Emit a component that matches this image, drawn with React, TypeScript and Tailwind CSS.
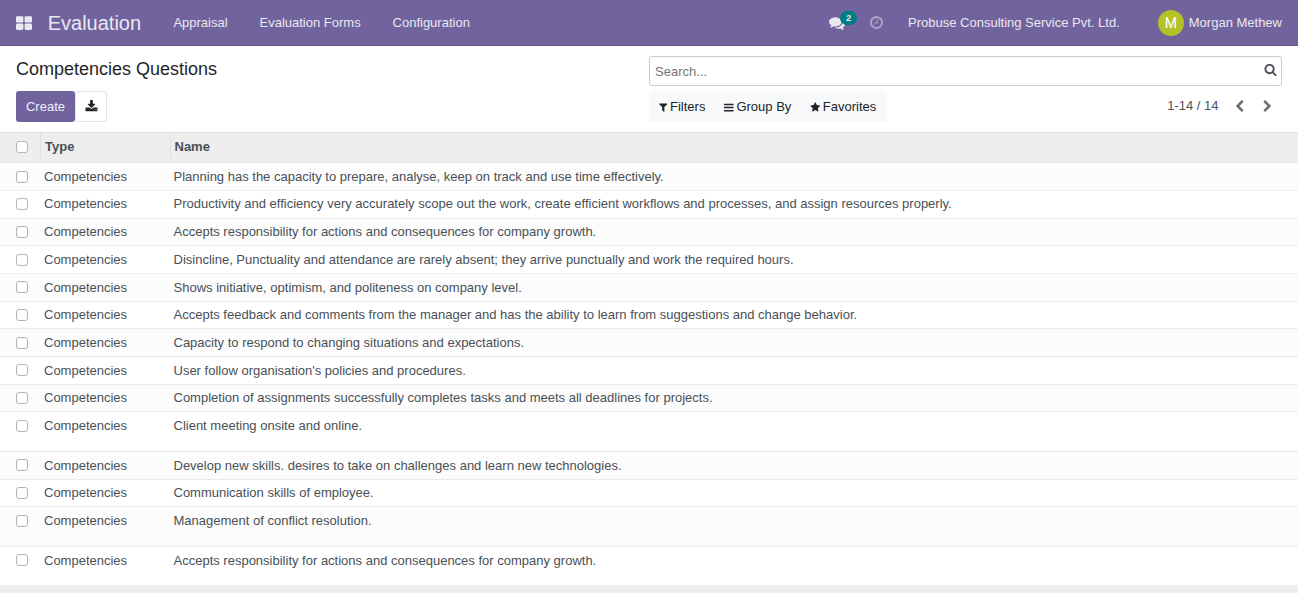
import React from "react";

const ICONS = {
  search: "M1216 832q0-185-131.5-316.5t-316.5-131.5-316.5 131.5-131.5 316.5 131.5 316.5 316.5 131.5 316.5-131.5 131.5-316.5zm512 832q0 52-38 90t-90 38q-54 0-90-38l-343-342q-179 124-399 124-143 0-273.5-55.5t-225-150-150-225-55.5-273.5 55.5-273.5 150-225 225-150 273.5-55.5 273.5 55.5 225 150 150 225 55.5 273.5q0 220-124 399l343 343q37 37 37 90z",
  star: "M1728 647q0 22-26 48l-363 354 86 500q1 7 1 20 0 21-10.5 35.5t-30.5 14.5q-19 0-40-12l-449-236-449 236q-22 12-40 12-21 0-31.5-14.5t-10.5-35.5q0-6 2-20l86-500-364-354q-25-27-25-48 0-37 56-46l502-73 225-455q19-41 49-41t49 41l225 455 502 73q56 9 56 46z",
  filter: "M1595 295q17 41-14 70l-493 493v742q0 42-39 59-13 5-25 5-27 0-45-19l-256-256q-19-19-19-45v-486l-493-493q-31-29-14-70 17-39 59-39h1280q42 0 59 39z",
  download: "M1344 1344q0-26-19-45t-45-19-45 19-19 45 19 45 45 19 45-19 19-45zm256 0q0-26-19-45t-45-19-45 19-19 45 19 45 45 19 45-19 19-45zm128-224v320q0 40-28 68t-68 28h-1472q-40 0-68-28t-28-68v-320q0-40 28-68t68-28h465l135 136q58 56 136 56t136-56l136-136h464q40 0 68 28t28 68zm-325-569q17 41-14 70l-448 448q-18 19-45 19t-45-19l-448-448q-31-29-14-70 17-39 59-39h256v-448q0-26 19-45t45-19h256q26 0 45 19t19 45v448h256q42 0 59 39z",
  clock: "M1024 544v448q0 14-9 23t-23 9h-320q-14 0-23-9t-9-23v-64q0-14 9-23t23-9h224v-352q0-14 9-23t23-9h64q14 0 23 9t9 23zm416 352q0-148-73-273t-198-198-273-73-273 73-198 198-73 273 73 273 198 198 273 73 273-73 198-198 73-273zm224 0q0 209-103 385.5t-279.5 279.5-385.5 103-385.5-103-279.5-279.5-103-385.5 103-385.5 279.5-279.5 385.5-103 385.5 103 279.5 279.5 103 385.5z",
  comments: "M1408 768q0 139-94 257t-256.5 186.5-353.5 68.5q-86 0-176-16-124 88-278 128-36 9-86 16h-3q-11 0-20.5-8t-11.5-21q-1-3-1-6.5t.5-6.5 2-6l2.5-5 3.5-5.5 4-5 4.5-5 4-4.5q5-6 23-25t26-29.5 22.5-29 25-38.5 20.5-44q-124-72-195-177t-71-224q0-139 94-257t256.5-186.5 353.5-68.5 353.5 68.5 256.5 186.5 94 257zm384 256q0 120-71 224.5t-195 176.5q10 24 20.5 44t25 38.5 22.5 29 26 29.5 23 25q1 1 4 4.5t4.5 5 4 5 3.5 5.5l2.5 5 2 6 .5 6.5-1 6.5q-3 14-13 22t-22 7q-50-7-86-16-154-40-278-128-90 16-176 16-271 0-472-132 58 4 88 4 161 0 309-45t264-129q125-92 192-212t67-254q0-77-23-152 129 71 204 178t75 230z",
  left: "M1427 301l-531 531 531 531q19 19 19 45t-19 45l-166 166q-19 19-45 19t-45-19l-742-742q-19-19-19-45t19-45l742-742q19-19 45-19t45 19l166 166q19 19 19 45t-19 45z",
  right: "M365 301l531 531-531 531q-19 19-19 45t19 45l166 166q19 19 45 19t45-19l742-742q19-19 19-45t-19-45l-742-742q-19-19-45-19t-45 19l-166 166q-19 19-19 45t19 45z",
};

function Icon({ name, className }: { name: keyof typeof ICONS; className: string }) {
  return (
    <svg viewBox="0 0 1792 1792" fill="currentColor" className={`shrink-0 overflow-visible ${className}`} aria-hidden="true">
      <path d={ICONS[name]} />
    </svg>
  );
}

function AppsIcon() {
  return (
    <svg viewBox="0 0 16 14" fill="currentColor" className="mt-[1px] h-[14px] w-4 shrink-0" aria-hidden="true">
      <rect x="0" y="0.2" width="7.4" height="6.4" rx="1.3" />
      <rect x="8.6" y="0.2" width="7.4" height="6.4" rx="1.3" />
      <rect x="0" y="7.5" width="7.4" height="6.4" rx="1.3" />
      <rect x="8.6" y="7.5" width="7.4" height="6.4" rx="1.3" />
    </svg>
  );
}

function BarsIcon() {
  return (
    <svg viewBox="0 0 10 9" fill="currentColor" className="mt-[2px] ml-[19px] h-[9px] w-[10px] shrink-0" aria-hidden="true">
      <rect x="0" y="0.7" width="9.6" height="1.5" rx="0.3" />
      <rect x="0" y="3.8" width="9.6" height="1.5" rx="0.3" />
      <rect x="0" y="6.9" width="9.6" height="1.5" rx="0.3" />
    </svg>
  );
}

function Checkbox({ label }: { label: string }) {
  return (
    <input
      type="checkbox"
      aria-label={label}
      className="block size-3 shrink-0 appearance-none rounded-[3px] border border-[#adb5bd] bg-white"
    />
  );
}

const ROWS: { name: string; height: string; check: string }[] = [
  { name: "Planning has the capacity to prepare, analyse, keep on track and use time effectively.", height: "h-[28px] pt-[4px]", check: "h-[20px]" },
  { name: "Productivity and efficiency very accurately scope out the work, create efficient workflows and processes, and assign resources properly.", height: "h-[28px] pt-[3px]", check: "h-[20px]" },
  { name: "Accepts responsibility for actions and consequences for company growth.", height: "h-[27px] pt-[3px]", check: "h-[20px]" },
  { name: "Disincline, Punctuality and attendance are rarely absent; they arrive punctually and work the required hours.", height: "h-[28px] pt-[4px]", check: "h-[20px]" },
  { name: "Shows initiative, optimism, and politeness on company level.", height: "h-[28px] pt-[4px]", check: "h-[18px]" },
  { name: "Accepts feedback and comments from the manager and has the ability to learn from suggestions and change behavior.", height: "h-[27px] pt-[3px]", check: "h-[20px]" },
  { name: "Capacity to respond to changing situations and expectations.", height: "h-[28px] pt-[4px]", check: "h-[20px]" },
  { name: "User follow organisation's policies and procedures.", height: "h-[28px] pt-[4px]", check: "h-[18px]" },
  { name: "Completion of assignments successfully completes tasks and meets all deadlines for projects.", height: "h-[27px] pt-[3px]", check: "h-[20px]" },
  { name: "Client meeting onsite and online.", height: "h-[40px] pt-[4px]", check: "h-[20px]" },
  { name: "Develop new skills. desires to take on challenges and learn new technologies.", height: "h-[28px] pt-[4px]", check: "h-[18px]" },
  { name: "Communication skills of employee.", height: "h-[27px] pt-[3px]", check: "h-[20px]" },
  { name: "Management of conflict resolution.", height: "h-[40px] pt-[4px]", check: "h-[20px]" },
  { name: "Accepts responsibility for actions and consequences for company growth.", height: "h-[38px] pt-[4px]", check: "h-[18px]" },
];

function Navbar() {
  return (
    <header className="flex h-[46px] shrink-0 items-center border-b border-[#5a4f7f] bg-[#71639e] px-4 text-[#eae8f0]">
      <AppsIcon />
      <span className="ml-[15.7px] pt-[2px] text-[20px]">Evaluation</span>
      <nav className="ml-[32.3px] flex gap-[31.9px]">
        <a>Appraisal</a>
        <a>Evaluation Forms</a>
        <a>Configuration</a>
      </nav>
      <div className="relative ml-auto flex items-center">
        <Icon name="comments" className="size-4" />
        <span className="absolute -top-[4px] left-[11px] flex h-[14px] w-[17px] items-center justify-center rounded-full bg-[#017e84] text-[9.5px] font-bold">
          2
        </span>
      </div>
      <Icon name="clock" className="ml-6 size-[15px] opacity-50" />
      <span className="ml-6">Probuse Consulting Service Pvt. Ltd.</span>
      <span className="mt-px ml-[38px] flex size-[26px] items-center justify-center rounded-full bg-[#b4c127] pt-[2px] font-[Roboto,sans-serif] text-[14px] text-white">M</span>
      <span className="ml-[5px]">Morgan Methew</span>
    </header>
  );
}

function ControlPanel() {
  return (
    <section className="flex h-[86px] shrink-0 justify-between px-4 pt-[10px]">
      <div>
        <h1 className="h-[35px] text-[18px] leading-[26px] text-[#212529]">Competencies Questions</h1>
        <div className="flex">
          <button className="h-[31px] w-[59px] rounded-[3px] bg-[#71639e] text-[#f1eff5]">Create</button>
          <button aria-label="Export" className="flex h-[31px] w-8 items-center justify-center rounded-[3px] border border-[#dee2e6] text-[#212529]">
            <Icon name="download" className="size-[13px]" />
          </button>
        </div>
      </div>
      <div className="w-[633px]">
        <div className="flex h-[30px] items-center justify-between rounded-[3px] border border-[#ccc] px-[5px]">
          <span className="pt-px text-[#757575]">Search...</span>
          <Icon name="search" className="-mr-px mb-[3px] size-[13px] text-[#495057]" />
        </div>
        <div className="mt-[5px] flex h-[31px] items-center justify-between">
          <div className="flex h-[31px] w-[238px] items-center rounded-[3px] bg-[#f8f9fa] pl-[9px] text-[#212529]">
            <Icon name="filter" className="mt-[2px] size-[10.5px]" />
            <span className="ml-[1.5px]">Filters</span>
            <BarsIcon />
            <span className="ml-[2px]">Group By</span>
            <Icon name="star" className="mt-[1px] ml-[18.5px] size-[10.5px]" />
            <span className="ml-[2.5px]">Favorites</span>
          </div>
          <div className="flex items-center pr-2 text-[#4c5157]">
            <span className="mb-[2px]">1-14 / 14</span>
            <Icon name="left" className="ml-[14.5px] size-[13px] text-[#6a6f74]" />
            <Icon name="right" className="ml-[15px] size-[13px] text-[#6a6f74]" />
          </div>
        </div>
      </div>
    </section>
  );
}

export default function App() {
  return (
    <div className="flex h-[594px] w-[1298px] flex-col overflow-hidden bg-white font-['Liberation_Sans',Arial,sans-serif] text-[13px] leading-[19.5px]">
      <Navbar />
      <ControlPanel />
      <div className="flex h-[31px] shrink-0 border-t border-b-2 border-t-[#dae0e6] border-b-[#e9ecef] bg-[#eee] font-bold text-[#495057]">
        <div className="flex w-[40px] items-center pl-4">
          <Checkbox label="Select all" />
        </div>
        <div className="w-[130px] border-l border-[#dee2e6] pt-1 pl-1">Type</div>
        <div className="flex-1 border-l border-[#dee2e6] pt-1 pl-[3.5px]">Name</div>
      </div>
      <main>
        {ROWS.map((row, i) => (
          <div key={i} className={`flex items-start border-b border-[#e9ecef] text-[#495057] odd:bg-[#fcfcfc] even:bg-white last:border-0 ${row.height}`}>
            <div className={`flex w-[44px] items-center pl-4 ${row.check}`}>
              <Checkbox label={row.name} />
            </div>
            <div className="w-[129.5px]">Competencies</div>
            <div>{row.name}</div>
          </div>
        ))}
      </main>
      <div className="h-2 shrink-0 bg-[#eee]" />
    </div>
  );
}
